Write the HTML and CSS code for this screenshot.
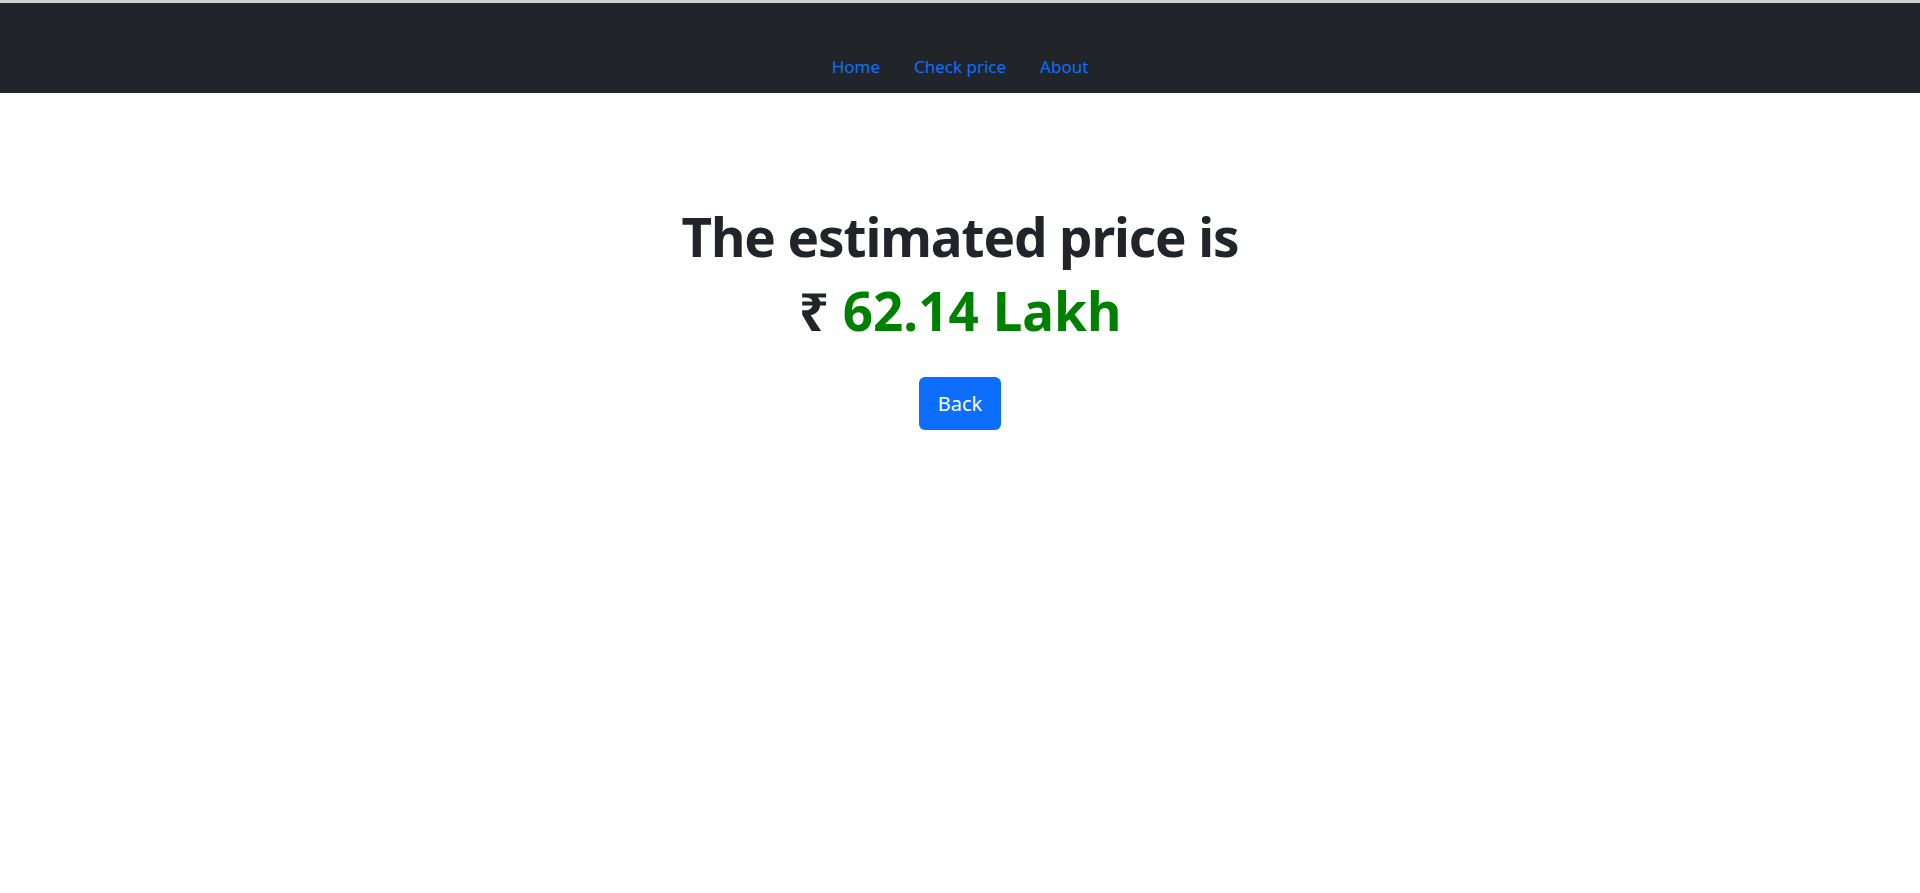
FILE: index.html
```html
<!DOCTYPE html>
<html lang="en">
<head>
<meta charset="utf-8">
<title>Price</title>
<link rel="stylesheet" href="styles.css">
</head>
<body>
<div class="topline"></div>
<nav class="navbar">
  <ul class="nav">
    <li><a class="nav-link" href="#">Home</a></li>
    <li><a class="nav-link" href="#">Check price</a></li>
    <li><a class="nav-link" href="#">About</a></li>
  </ul>
</nav>
<main class="result">
  <h1 class="title"><span class="line1">The estimated price is</span><br><span class="line2"><span class="rupee">₹</span> <span class="price">62.14 Lakh</span></span></h1>
  <a class="btn" href="#">Back</a>
</main>
</body>
</html>
```
FILE: styles.css
```css
html, body {
  margin: 0;
  padding: 0;
  background: #fff;
  font-family: "Noto Sans", "Open Sans", sans-serif;
  color: #212529;
}
.topline {
  height: 3px;
  background: #d0d1d3;
}
.navbar {
  height: 90px;
  background: #212529;
  display: flex;
  justify-content: center;
  align-items: flex-end;
}
.nav {
  list-style: none;
  margin: 0;
  padding: 0 0 6px 0;
  display: flex;
  gap: 2px;
}
.nav-link {
  display: block;
  padding: 8px 16px;
  color: #0d6efd;
  text-decoration: none;
  font-size: 17px;
  line-height: 24px;
}
.result {
  display: flex;
  flex-direction: column;
  align-items: center;
  padding-top: 107px;
}
.title {
  margin: 0;
  text-align: center;
  font-size: 53px;
  font-weight: 700;
  line-height: 74px;
}
.line1 {
  letter-spacing: -1.1px;
}
.price {
  color: #008000;
}
.btn {
  margin-top: 29px;
  display: inline-block;
  background: #0d6efd;
  color: #fff;
  text-decoration: none;
  font-size: 20px;
  line-height: 30px;
  padding: 12px 19px 11px;
  border-radius: 6px;
}
```
